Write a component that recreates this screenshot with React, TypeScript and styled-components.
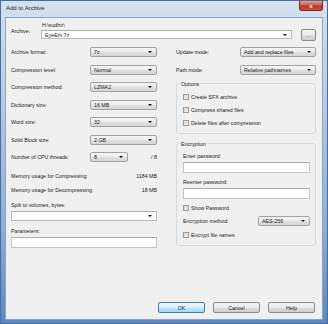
import styled, { createGlobalStyle } from 'styled-components';

const GlobalStyle = createGlobalStyle`
  html, body {
    margin: 0;
    padding: 0;
    background: #ffffff;
  }
  body {
    font-family: 'Liberation Sans', Arial, sans-serif;
  }
`;

const Window = styled.div`
  width: 328px;
  height: 324px;
  box-sizing: border-box;
  display: flex;
  flex-direction: column;
  background: linear-gradient(180deg, #d4e1f0 0%, #bccfe6 25%, #8eaed8 70%, #5c87c3 100%);
  border: 1px solid #4a6d9a;
  font-size: 5.3px;
  line-height: 8px;
  color: #1a1a1a;
`;

const TitleBar = styled.div`
  height: 16px;
  display: flex;
  align-items: flex-start;
  justify-content: space-between;
  padding-left: 5px;
`;

const Title = styled.span`
  margin-top: 3px;
  font-size: 6px;
  color: #1d2733;
`;

const CloseButton = styled.div`
  width: 24px;
  height: 10px;
  margin-right: 4px;
  box-sizing: border-box;
  display: flex;
  align-items: center;
  justify-content: center;
  background: linear-gradient(180deg, #e6a093 0%, #cf5a4b 45%, #bb3527 55%, #c9493a 100%);
  border: 1px solid #7a2a22;
  border-top: none;
  border-radius: 0 0 3px 3px;
  color: #ffffff;
  font-size: 6px;
  font-weight: bold;
`;

const Client = styled.div`
  flex: 1;
  margin: 0 4px 3px 4px;
  box-sizing: border-box;
  display: flex;
  flex-direction: column;
  padding: 3px 6px 6px 5px;
  background: #f0f0f0;
  border: 1px solid #8ba5c6;
`;

const ArchiveRow = styled.div`
  display: grid;
  grid-template-columns: 30px 251px 24px;
  grid-template-rows: 8px 12px;
`;

const ArchiveLabel = styled.span`
  grid-row: 1 / 3;
  align-self: center;
`;

const PathText = styled.span`
  grid-column: 2;
  grid-row: 1;
  padding-left: 1px;
`;

const ComboBox = styled.div<{ $height?: number }>`
  height: ${p => p.$height ?? 10}px;
  box-sizing: border-box;
  display: flex;
  align-items: center;
  justify-content: space-between;
  padding: 0 4px 0 3px;
  background: #ffffff;
  border: 1px solid #b6b9c1;
  border-top-color: #abadb3;
`;

const ArchiveCombo = styled(ComboBox)`
  grid-column: 2;
  grid-row: 2;
  margin-top: 1px;
`;

const Arrow = styled.span`
  width: 0;
  height: 0;
  border-left: 2px solid transparent;
  border-right: 2px solid transparent;
  border-top: 2.5px solid #111111;
`;

const BrowseButton = styled.div`
  grid-column: 3;
  grid-row: 2;
  justify-self: end;
  width: 15px;
  box-sizing: border-box;
  display: flex;
  align-items: center;
  justify-content: center;
  background: linear-gradient(180deg, #f2f2f2 0%, #ebebeb 50%, #dddddd 51%, #cfcfcf 100%);
  border: 1px solid #8a8a8a;
  border-radius: 2px;
  color: #555555;
`;

const Columns = styled.div`
  margin-top: 6px;
  display: grid;
  grid-template-columns: 146px 140px;
  column-gap: 19px;
  align-items: start;
`;

const Column = styled.div`
  display: flex;
  flex-direction: column;
`;

const FormGrid = styled.div<{ $labelWidth: number }>`
  display: grid;
  grid-template-columns: ${p => p.$labelWidth}px 1fr;
  grid-auto-rows: 10px;
  row-gap: 7.5px;
  align-items: center;
`;

const Select = styled.div<{ $width?: number }>`
  width: ${p => (p.$width ? `${p.$width}px` : 'auto')};
  height: 10px;
  box-sizing: border-box;
  display: flex;
  align-items: center;
  justify-content: space-between;
  padding: 0 4px 0 3px;
  background: linear-gradient(180deg, #f4f4f4 0%, #ececec 50%, #e0e0e0 51%, #d6d6d6 100%);
  border: 1px solid #a3a3a3;
  border-radius: 2px;
`;

const ThreadCell = styled.div`
  display: flex;
  align-items: center;
  justify-content: space-between;
`;

const MemoryList = styled.div`
  margin-top: 10px;
  display: flex;
  flex-direction: column;
  gap: 6px;
`;

const MemoryRow = styled.div`
  display: flex;
  justify-content: space-between;
`;

const Field = styled.div<{ $mt: number }>`
  margin-top: ${p => p.$mt}px;
  display: flex;
  flex-direction: column;
  gap: 2px;
`;

const TextInput = styled.div<{ $height?: number }>`
  height: ${p => p.$height ?? 11}px;
  box-sizing: border-box;
  background: #ffffff;
  border: 1px solid #c2c5cc;
  border-top-color: #abadb3;
`;

const Group = styled.fieldset<{ $mt: number }>`
  margin: ${p => p.$mt}px 0 0 0;
  padding: 0 5px 6px 6px;
  min-inline-size: 0;
  border: 1px solid #d3dbe2;
  border-radius: 3px;
`;

const Legend = styled.legend`
  margin-left: -3px;
  padding: 0 1px;
  line-height: 8px;
`;

const CheckList = styled.div`
  padding-top: 5px;
  display: flex;
  flex-direction: column;
  gap: 5px;
`;

const CheckRow = styled.div<{ $mt?: number }>`
  margin-top: ${p => p.$mt ?? 0}px;
  height: 8px;
  display: flex;
  align-items: center;
  gap: 2px;
`;

const CheckBox = styled.span`
  width: 6px;
  height: 6px;
  box-sizing: border-box;
  background: linear-gradient(135deg, #d8d8d8 0%, #f4f4f4 100%);
  border: 1px solid #9a9a9a;
`;

const MethodRow = styled.div`
  margin-top: 4px;
  height: 10px;
  display: grid;
  grid-template-columns: 75px 52px;
  align-items: center;
`;

const ButtonRow = styled.div`
  margin-top: auto;
  display: flex;
  justify-content: flex-end;
  gap: 8px;
  padding-right: 1px;
`;

const DialogButton = styled.div<{ $default?: boolean }>`
  width: 47px;
  height: 11px;
  box-sizing: border-box;
  display: flex;
  align-items: center;
  justify-content: center;
  border-radius: 2px;
  border: 1px solid ${p => (p.$default ? '#3c7fb1' : '#8a8a8a')};
  background: ${p =>
    p.$default
      ? 'linear-gradient(180deg, #eaf6fd 0%, #d9f0fc 50%, #bee6fd 51%, #a7d9f5 100%)'
      : 'linear-gradient(180deg, #f2f2f2 0%, #ebebeb 50%, #dddddd 51%, #cfcfcf 100%)'};
`;

const leftSelects = [
  { label: 'Archive format:', value: '7z' },
  { label: 'Compression level:', value: 'Normal' },
  { label: 'Compression method:', value: 'LZMA2' },
  { label: 'Dictionary size:', value: '16 MB' },
  { label: 'Word size:', value: '32' },
  { label: 'Solid Block size:', value: '2 GB' }
];

const options = ['Create SFX archive', 'Compress shared files', 'Delete files after compression'];

export default function App() {
  return (
    <>
      <GlobalStyle />
      <Window>
        <TitleBar>
          <Title>Add to Archive</Title>
          <CloseButton>x</CloseButton>
        </TitleBar>
        <Client>
          <ArchiveRow>
            <ArchiveLabel>Archive:</ArchiveLabel>
            <PathText>H:\sudhir\</PathText>
            <ArchiveCombo $height={9}>
              <span>EyeEm.7z</span>
              <Arrow />
            </ArchiveCombo>
            <BrowseButton>...</BrowseButton>
          </ArchiveRow>

          <Columns>
            <Column>
              <FormGrid $labelWidth={79}>
                {leftSelects.flatMap(s => [
                  <span key={s.label}>{s.label}</span>,
                  <Select key={s.label + '-v'}>
                    <span>{s.value}</span>
                    <Arrow />
                  </Select>
                ])}
                <span>Number of CPU threads:</span>
                <ThreadCell>
                  <Select $width={38}>
                    <span>8</span>
                    <Arrow />
                  </Select>
                  <span>/ 8</span>
                </ThreadCell>
              </FormGrid>

              <MemoryList>
                <MemoryRow>
                  <span>Memory usage for Compressing:</span>
                  <span>1184 MB</span>
                </MemoryRow>
                <MemoryRow>
                  <span>Memory usage for Decompressing:</span>
                  <span>18 MB</span>
                </MemoryRow>
              </MemoryList>

              <Field $mt={7}>
                <span>Split to volumes, bytes:</span>
                <ComboBox>
                  <span />
                  <Arrow />
                </ComboBox>
              </Field>

              <Field $mt={6}>
                <span>Parameters:</span>
                <TextInput />
              </Field>
            </Column>

            <Column>
              <FormGrid $labelWidth={64}>
                <span>Update mode:</span>
                <Select>
                  <span>Add and replace files</span>
                  <Arrow />
                </Select>
                <span>Path mode:</span>
                <Select>
                  <span>Relative pathnames</span>
                  <Arrow />
                </Select>
              </FormGrid>

              <Group $mt={5}>
                <Legend>Options</Legend>
                <CheckList>
                  {options.map(o => (
                    <CheckRow key={o}>
                      <CheckBox />
                      <span>{o}</span>
                    </CheckRow>
                  ))}
                </CheckList>
              </Group>

              <Group $mt={6}>
                <Legend>Encryption</Legend>
                <Field $mt={4}>
                  <span>Enter password:</span>
                  <TextInput />
                </Field>
                <Field $mt={5}>
                  <span>Reenter password:</span>
                  <TextInput />
                </Field>
                <CheckRow $mt={5}>
                  <CheckBox />
                  <span>Show Password</span>
                </CheckRow>
                <MethodRow>
                  <span>Encryption method:</span>
                  <Select>
                    <span>AES-256</span>
                    <Arrow />
                  </Select>
                </MethodRow>
                <CheckRow $mt={5}>
                  <CheckBox />
                  <span>Encrypt file names</span>
                </CheckRow>
              </Group>
            </Column>
          </Columns>

          <ButtonRow>
            <DialogButton $default>OK</DialogButton>
            <DialogButton>Cancel</DialogButton>
            <DialogButton>Help</DialogButton>
          </ButtonRow>
        </Client>
      </Window>
    </>
  );
}
